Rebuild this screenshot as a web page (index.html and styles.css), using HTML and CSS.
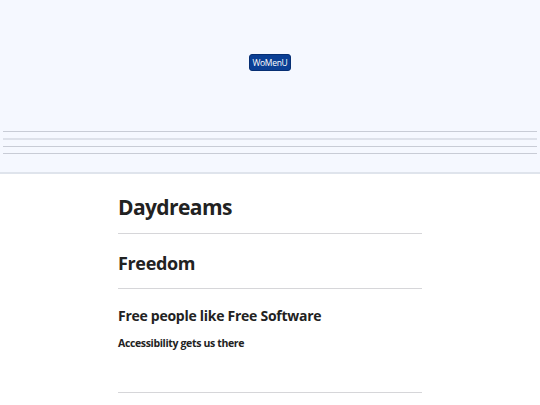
FILE: index.html
```html
<!DOCTYPE html>
<html lang="en">
<head>
<meta charset="utf-8">
<title>Daydreams</title>
<link rel="stylesheet" href="styles.css">
</head>
<body>
<header class="masthead">
  <div class="menu-area">
    <button class="menu-btn" type="button">WoMenU</button>
  </div>
  <div class="rules">
    <hr class="rule">
    <hr class="rule rule-light">
    <hr class="rule">
    <hr class="rule">
  </div>
</header>
<main class="content">
  <section class="block">
    <h1 class="title">Daydreams</h1>
  </section>
  <section class="block">
    <h2 class="subtitle">Freedom</h2>
  </section>
  <section class="block block-tall">
    <h3 class="heading">Free people like Free Software</h3>
    <h4 class="note">Accessibility gets us there</h4>
  </section>
</main>
</body>
</html>
```
FILE: styles.css
```css
html, body {
  margin: 0;
  padding: 0;
  background: #ffffff;
  font-family: "Open Sans", "Noto Sans", sans-serif;
  color: #222222;
}
.masthead {
  background: #f5f8ff;
  border-bottom: 2px solid #dfe4ec;
  height: 172px;
  display: flex;
  flex-direction: column;
}
.menu-area {
  display: flex;
  justify-content: center;
  align-items: flex-start;
  padding-top: 54px;
  height: 131px;
  flex: none;
  box-sizing: border-box;
}
.menu-btn {
  background: #0b3f94;
  color: #ffffff;
  border: 1px solid #072f73;
  border-radius: 3px;
  font-family: "Open Sans", sans-serif;
  font-size: 8.5px;
  letter-spacing: -0.3px;
  height: 17px;
  width: 42px;
  padding: 0;
  line-height: 15px;
}
.rules {
  padding: 0 3px;
  display: flex;
  flex-direction: column;
  gap: 6px;
}
.rule {
  margin: 0;
  border: 0;
  height: 1px;
  background: #c8ccd6;
}
.rule-light {
  height: 2px;
  background: #dde1ea;
}
.content {
  width: 304px;
  margin: 0 auto;
}
.block {
  border-bottom: 1px solid #d6d6d9;
}
.title {
  margin: 0;
  padding: 20px 0 13px;
  font-size: 21px;
  line-height: 26px;
  font-weight: 700;
  letter-spacing: -0.6px;
}
.subtitle {
  margin: 0;
  padding: 18px 0 14px;
  font-size: 18px;
  line-height: 22px;
  font-weight: 700;
  letter-spacing: -0.35px;
}
.block-tall {
  height: 103px;
}
.heading {
  margin: 0;
  padding: 17px 0 0;
  font-size: 14px;
  line-height: 20px;
  font-weight: 700;
  letter-spacing: -0.27px;
}
.note {
  margin: 0;
  padding-top: 10px;
  font-size: 10.5px;
  line-height: 14px;
  font-weight: 700;
  letter-spacing: -0.35px;
}
```
